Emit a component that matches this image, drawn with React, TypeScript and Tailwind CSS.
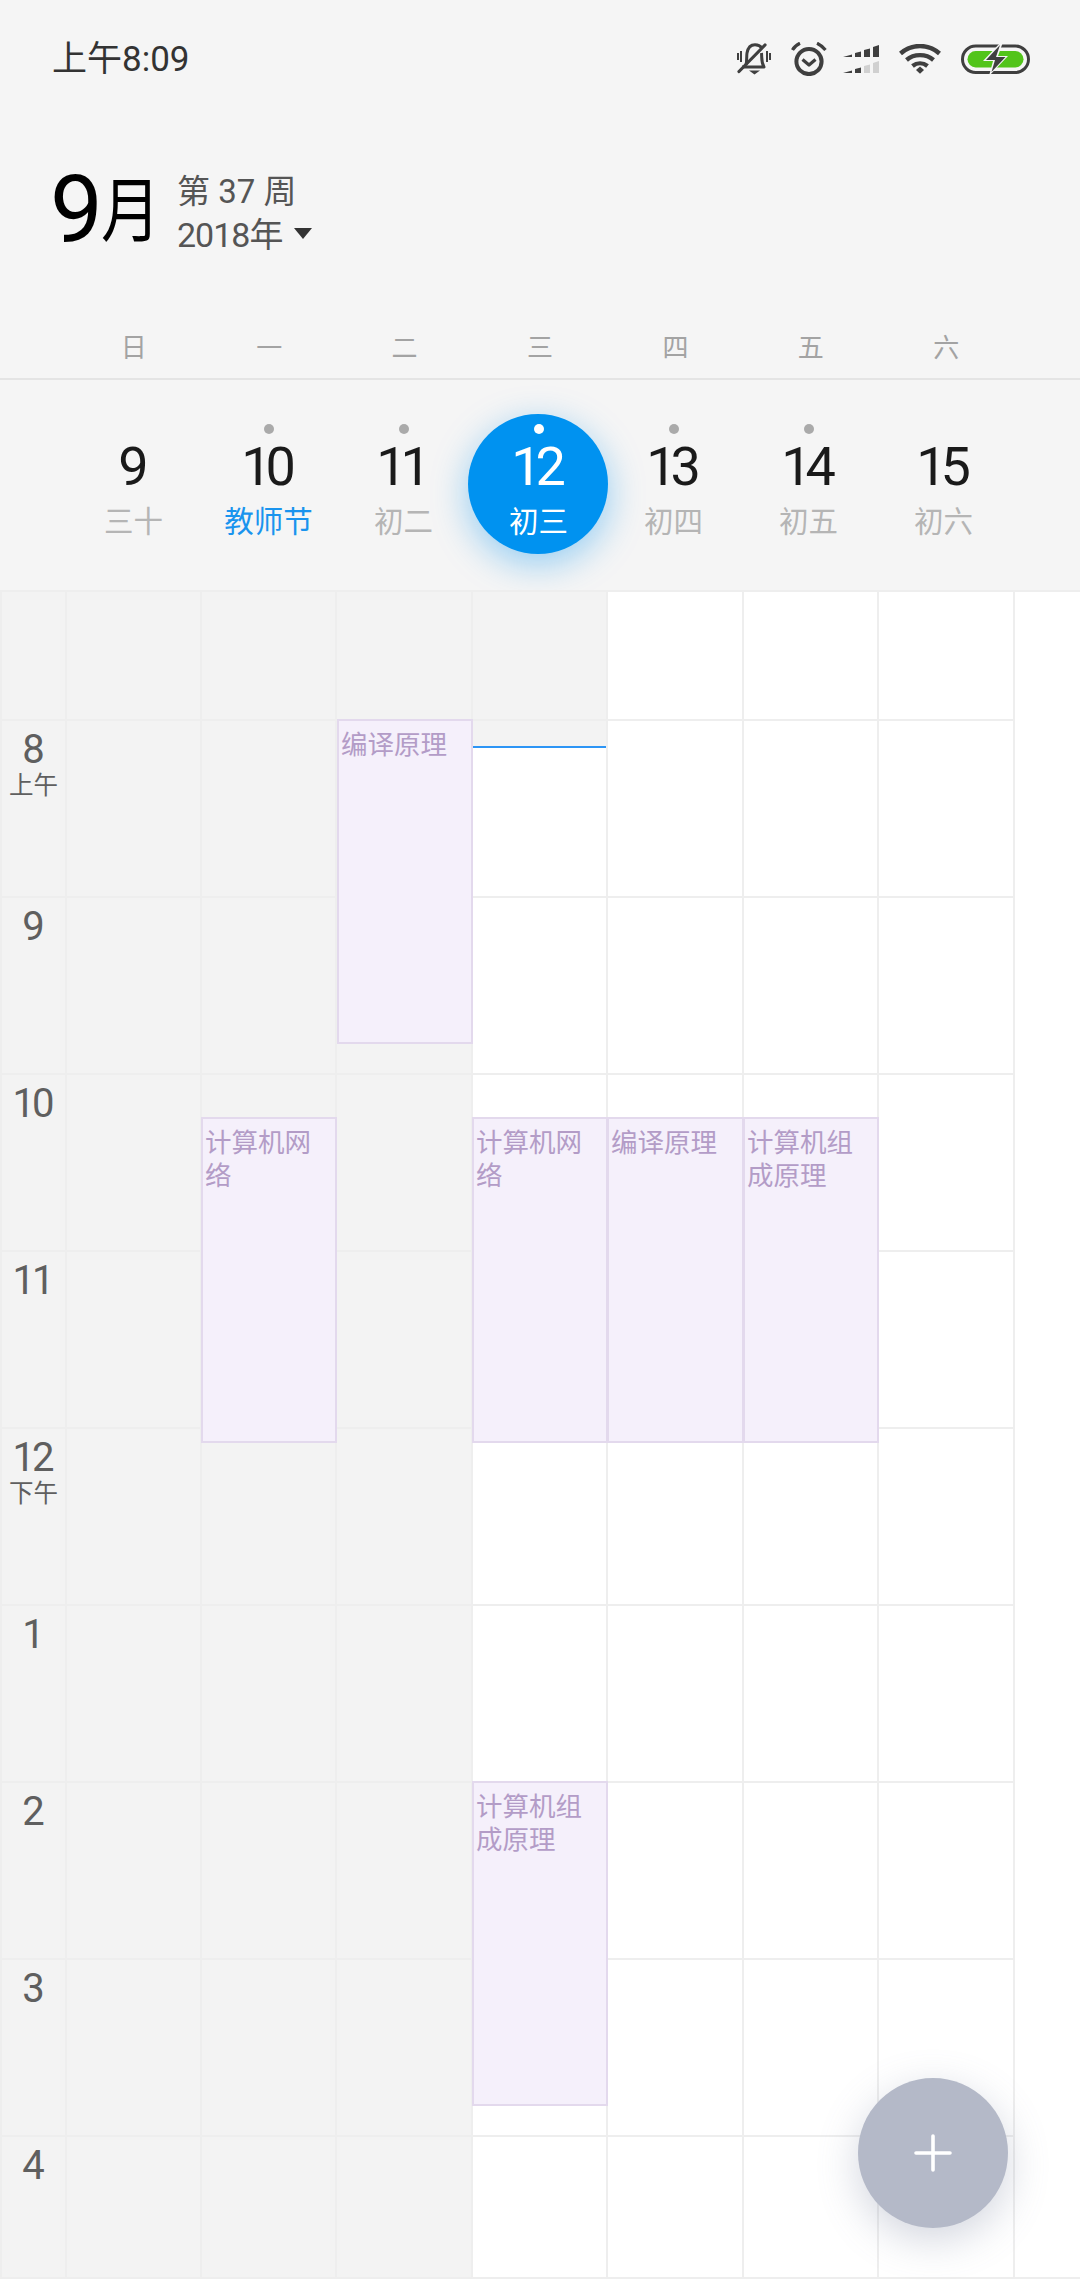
import React from "react";

const WEEK = ["日", "一", "二", "三", "四", "五", "六"];
const DATES = [
  { n: "9", l: "三十", dot: false },
  { n: "10", l: "教师节", dot: true, fest: true },
  { n: "11", l: "初二", dot: true },
  { n: "12", l: "初三", dot: true, today: true },
  { n: "13", l: "初四", dot: true },
  { n: "14", l: "初五", dot: true },
  { n: "15", l: "初六", dot: false },
];
const ROWS = [
  { h: "", s: "" },
  { h: "8", s: "上午" },
  { h: "9", s: "" },
  { h: "10", s: "" },
  { h: "11", s: "" },
  { h: "12", s: "下午" },
  { h: "1", s: "" },
  { h: "2", s: "" },
  { h: "3", s: "" },
  { h: "4", s: "" },
];
const EVENTS = [
  { t: "编译原理", c: "left-[337px] top-[129px] w-[136px] h-[325px]" },
  { t: "计算机网络", c: "left-[201px] top-[527px] w-[136px] h-[326px]" },
  { t: "计算机网络", c: "left-[472px] top-[527px] w-[136px] h-[326px]" },
  { t: "编译原理", c: "left-[607px] top-[527px] w-[137px] h-[326px]" },
  { t: "计算机组成原理", c: "left-[743px] top-[527px] w-[136px] h-[326px]" },
  { t: "计算机组成原理", c: "left-[472px] top-[1191px] w-[136px] h-[325px]" },
];

function BellOff() {
  return (
    <svg width="34" height="32" viewBox="0 0 34 32" fill="none" stroke="#3f3f3f">
      <path d="M9 22 C10 18 9.5 13 10 10 C11 4.5 14 1.8 18 1.8 C21 1.8 23.5 3 25 5" strokeWidth="3" />
      <path d="M24.5 10 C25 15 24 19 27 24 L5 24" strokeWidth="3" strokeLinejoin="round" />
      <path d="M1 10 V17 M4 8 V19 M30 8 V19 M33 10 V17" strokeWidth="2" />
      <path d="M2 28.5 L28 2" strokeWidth="3.2" strokeLinecap="round" />
      <path d="M12 27.5 H23 L17.5 31.5 Z" fill="#3f3f3f" stroke="none" />
    </svg>
  );
}
function Alarm() {
  return (
    <svg width="36" height="34" viewBox="0 0 36 34" fill="none" stroke="#3f3f3f">
      <circle cx="18" cy="19.5" r="12.6" strokeWidth="4" />
      <path d="M11.5 17.5 L18 23 L24.5 17.5" strokeWidth="3.2" strokeLinejoin="round" />
      <path d="M1.5 8 C3 5 5.5 2.8 9 1.2 M26 1.2 C29.5 2.8 32 5 34.5 8" strokeWidth="3.2" />
    </svg>
  );
}
function Signal() {
  return (
    <svg width="36" height="28" viewBox="0 0 36 28">
      <path d="M0 12 L9 9.5 V12 Z M12 8 L18 6.5 V12 H12 Z M21 5 L27 3.5 V12 H21 Z M30 2 L36 0 V12 H30 Z" fill="#3f3f3f" />
      <path d="M0 28 L9 25.5 V28 Z M12 24 L18 22.5 V28 H12 Z" fill="#3f3f3f" />
      <path d="M21 21 L27 19.5 V28 H21 Z M30 18 L36 16 V28 H30 Z" fill="#d0d0d0" />
    </svg>
  );
}
function Wifi() {
  return (
    <svg width="42" height="30" viewBox="0 0 42 30" fill="none" stroke="#3f3f3f" strokeWidth="4.4">
      <path d="M1.5 9.5 C12.5 -0.5 29.5 -0.5 40.5 9.5" />
      <path d="M7.5 16 C15 9.5 27 9.5 34.5 16" />
      <path d="M13.5 22 C18 18.5 24 18.5 28.5 22" />
      <path d="M17 26 L21 22.6 L25 26 L21 29.8 Z" fill="#3f3f3f" stroke="none" />
    </svg>
  );
}
function Battery() {
  return (
    <svg width="69" height="32" viewBox="0 0 69 32" fill="none">
      <rect x="1.5" y="3" width="66" height="26.5" rx="13.2" stroke="#3f3f3f" strokeWidth="3" />
      <rect x="6.5" y="8" width="56" height="16.5" rx="8.2" fill="#52c41a" />
      <path d="M40 -1 L22 18 H32 L28 33 L47 13 H37 L42 -1 Z" fill="#f5f5f5" />
      <path d="M39 2 L25 17 H34 L30.5 29 L44.5 14 H35 Z" fill="#3f3f3f" />
    </svg>
  );
}

export default function App() {
  return (
    <div className="relative w-[1080px] h-[2280px] overflow-hidden bg-white font-['Roboto','Noto_Sans_CJK_SC',sans-serif]">
      <header className="bg-[#f5f5f5] h-[590px] flex flex-col">
        <div className="h-[118px] flex items-center justify-between pl-[52px] pr-[50px]">
          <span className="text-[35px] leading-none text-[#333333]">上午8:09</span>
          <div className="flex items-center">
            <BellOff />
            <span className="ml-[20px]"><Alarm /></span>
            <span className="ml-[16px]"><Signal /></span>
            <span className="ml-[20px]"><Wifi /></span>
            <span className="ml-[20px]"><Battery /></span>
          </div>
        </div>
        <div className="h-[199px] pl-[50px] flex items-start">
          <div className="flex items-baseline text-black mt-[44px] w-[127px]">
            <span className="text-[94px] leading-[96px]">9</span>
            <span className="relative top-[-6px] inline-block origin-left scale-x-[0.85] text-[70px] leading-[96px] ml-[-2px]">月</span>
          </div>
          <div className="mt-[54px] text-[#555555]">
            <div className="text-[33px] leading-[40px] whitespace-nowrap">第 37 周</div>
            <div className="flex items-center mt-[1px]">
              <span className="text-[34px] tracking-[-1px] leading-[44px] whitespace-nowrap">2018年</span>
              <span className="ml-[12px] mt-[-4px] w-0 h-0 border-l-[9px] border-r-[9px] border-t-[11px] border-l-transparent border-r-transparent border-t-[#333333]" />
            </div>
          </div>
        </div>
        <div className="h-[63px] shrink-0 border-b-2 border-[#e4e4e4] flex pl-[66px] pr-[66px] items-center">
          {WEEK.map((w) => (
            <div key={w} className="flex-1 text-center text-[26px] leading-none text-[#a3a3a3]">{w}</div>
          ))}
        </div>
        <div className="flex-1 flex pl-[66px]">
          {DATES.map((d) => (
            <div key={d.n} className="relative w-[135px] flex flex-col items-center">
              {d.today && (
                <div className="absolute left-[-3px] top-[34px] w-[140px] h-[140px] rounded-full bg-[#0092f0] shadow-[0_10px_36px_rgba(0,146,240,0.4)]" />
              )}
              <div className={`relative mt-[44px] w-[10px] h-[10px] rounded-full ${d.today ? "bg-white" : d.dot ? "bg-[#aaaaaa]" : "bg-transparent"}`} />
              <div className={`relative mt-[6px] text-[54px] leading-[54px] ${d.n.length > 1 ? "tracking-[-6px] pr-[6px]" : ""} ${d.today ? "text-white" : "text-[#1a1a1a]"}`}>{d.n}</div>
              <div className={`relative mt-[10px] text-[29.5px] leading-[36px] whitespace-nowrap ${d.today ? "text-white" : d.fest ? "text-[#1a94ee]" : "text-[#b5b5b5]"}`}>{d.l}</div>
            </div>
          ))}
        </div>
      </header>

      <main className="relative border-b-2 border-[#eeeeee]">
        <div className="grid grid-cols-[65px_135px_135px_136px_135px_136px_135px_136px_1fr]">
          {ROWS.map((r, i) => (
            <React.Fragment key={i}>
              <div className={`border-t-2 border-l-2 border-[#eeeeee] bg-[#f3f3f3] flex flex-col items-center text-[#5f5f5f] ${i === 0 ? "h-[129px]" : i === 9 ? "h-[142px]" : "h-[177px]"}`}>
                {r.h && <span className={`mt-[9px] text-[40px] leading-[40px] ${r.h.length > 1 ? "tracking-[-3px] pr-[3px]" : ""}`}>{r.h}</span>}
                {r.s && <span className="mt-[2px] text-[24.5px] leading-[28px] whitespace-nowrap">{r.s}</span>}
              </div>
              {WEEK.map((_, d) => (
                <div key={d} className={`border-t-2 border-l-2 border-[#eeeeee] ${d < 3 || (d === 3 && i === 0) ? "bg-[#f3f3f3]" : "bg-white"}`}>
                  {d === 3 && i === 1 && <div className="h-[27px] bg-[#f3f3f3] border-b-2 border-[#2d95f5]" />}
                </div>
              ))}
              <div className={`border-l-2 border-[#eeeeee] ${i === 0 ? "border-t-2" : ""}`} />
            </React.Fragment>
          ))}
        </div>
        {EVENTS.map((e, i) => (
          <div key={i} className={`absolute ${e.c} bg-[#f5f0fb] border-2 border-[#e3d9ed] px-[2px] pt-[7px] text-[26.5px] leading-[33px] text-[#b39cc7]`}>
            {e.t}
          </div>
        ))}
      </main>

      <button className="absolute left-[858px] top-[2078px] w-[150px] h-[150px] rounded-full bg-[#b4b9c8] shadow-[0_12px_40px_rgba(110,120,150,0.3)] flex items-center justify-center">
        <svg width="38" height="38" viewBox="0 0 38 38" fill="none" stroke="#ffffff" strokeWidth="3.6" strokeLinecap="round">
          <path d="M19 2 V36 M2 19 H36" />
        </svg>
      </button>
    </div>
  );
}
